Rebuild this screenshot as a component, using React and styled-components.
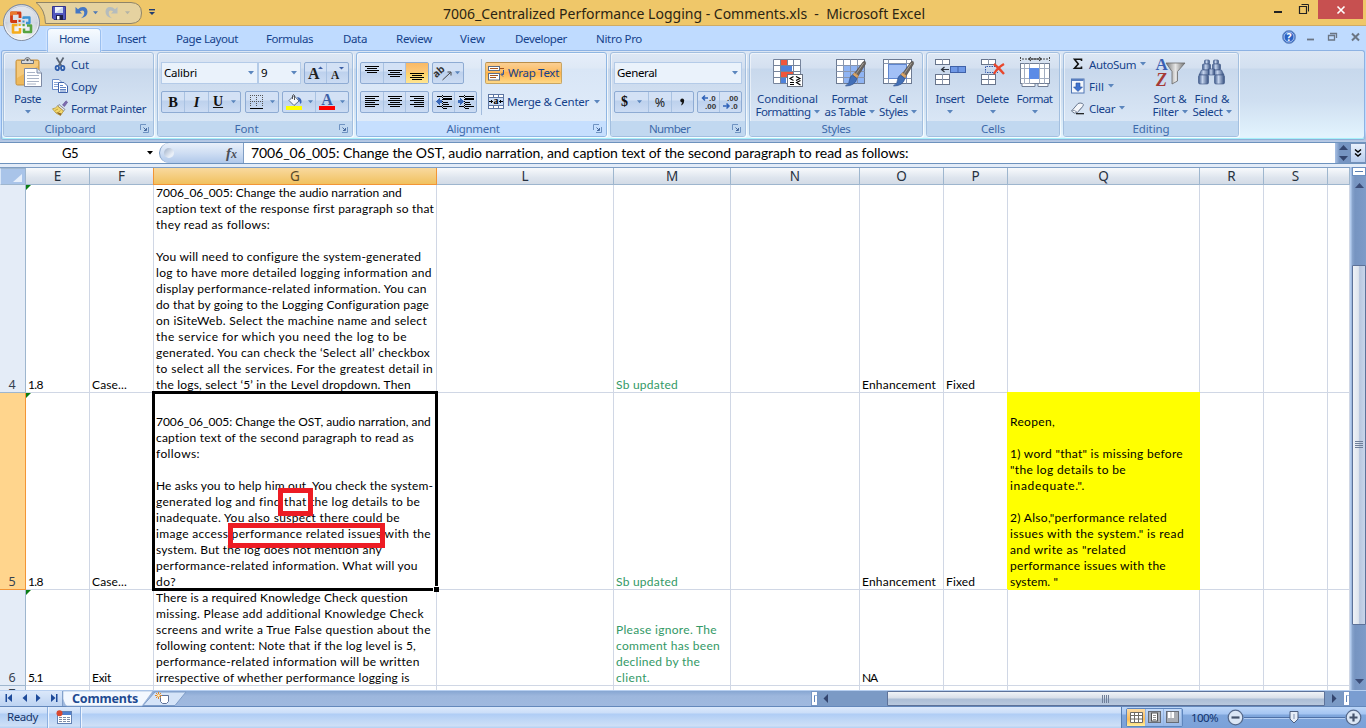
import React, { useLayoutEffect, useRef, useState } from "react";
import styled, { createGlobalStyle, css } from "styled-components";

const ui = `"Noto Sans", "Open Sans", sans-serif`;
const sheetFont = `Lato, "Noto Sans", sans-serif`;

const Global = createGlobalStyle`
  * { box-sizing: border-box; }
  html, body { margin: 0; padding: 0; overflow: hidden; }
  body { font-family: ${ui}; font-size: 11.5px; color: #15428b; background: #bfdbff; }
  svg { display: block; flex: none; overflow: visible; }
`;

/* ---------- text that is spaced to a known width ---------- */
const FitSpan = styled.span`
  display: block;
  white-space: pre;
  flex: none;
`;
function Fit({ w, children, ...rest }) {
  const ref = useRef(null);
  const [gap, setGap] = useState(0);
  useLayoutEffect(() => {
    const range = document.createRange();
    range.selectNodeContents(ref.current);
    const natural = range.getBoundingClientRect().width;
    const n = String(children).length;
    setGap((w - natural) / n);
  }, [w, children]);
  return (
    <FitSpan ref={ref} style={{ letterSpacing: gap, width: w }} {...rest}>
      {children}
    </FitSpan>
  );
}

/* ---------- frame ---------- */
const Window = styled.div`
  width: 1366px;
  height: 728px;
  display: flex;
  flex-direction: column;
  position: relative;
  overflow: hidden;
`;
const TitleBar = styled.header`
  height: 26px;
  flex: none;
  background: #efc769;
  border-bottom: 1px solid #cfab64;
  display: flex;
  position: relative;
`;
const QuickAccess = styled.div`
  width: 106px;
  height: 22px;
  margin: 2px 0 0 36px;
  position: relative;
`;
const QuickShape = styled.svg`
  position: absolute;
  left: 0;
  top: 0;
`;
const QuickItems = styled.div`
  position: relative;
  display: flex;
  align-items: center;
  height: 21px;
  padding-left: 16px;
`;
const QuickItem = styled.div`
  margin-right: ${(p) => p.$mr}px;
`;
const QuickMore = styled.div`
  margin: 7px 0 0 7px;
`;
const TitleText = styled.div`
  margin: 4px 0 0 288px;
  font-size: 14px;
  line-height: 20px;
  color: #2b2413;
`;
const WindowButtons = styled.div`
  margin-left: auto;
  display: flex;
  align-items: flex-start;
`;
const CloseButton = styled.div`
  width: 45px;
  height: 19px;
  margin: 0 3px 0 9px;
  background: #c75050;
  display: flex;
  align-items: center;
  justify-content: center;
`;
const Orb = styled.svg`
  position: absolute;
  left: 2px;
  top: 3px;
  z-index: 3;
`;
const TabRow = styled.nav`
  height: 24px;
  flex: none;
  background: #bfdbff;
  display: flex;
  padding-left: 47px;
`;
const Tab = styled.div`
  margin: 2px 0 0 ${(p) => p.$gap || 0}px;
  height: 22px;
  line-height: 21px;
  ${(p) =>
    p.$active &&
    css`
      width: 54px;
      height: 24px;
      padding-left: 11px;
      position: relative;
      z-index: 2;
      border: 1px solid #9bc0f0;
      border-bottom: 0;
      border-radius: 4px 4px 0 0;
      line-height: 20px;
      background: linear-gradient(#f7fbff, #e6f0fc 60%, #dfe8f5);
      box-shadow: 0 0 2px #fff;
    `}
`;
const TabTools = styled.div`
  margin-left: auto;
  display: flex;
  align-items: flex-start;
`;

/* ---------- ribbon ---------- */
const RibbonArea = styled.div`
  height: 92px;
  flex: none;
  padding: 0 1px;
  background: linear-gradient(#bfdbff 0 80px, #a8bfdf 88px, #b9cbe6);
`;
const Ribbon = styled.section`
  height: 89px;
  border: 1px solid #8db2e3;
  border-bottom: 1px solid #a5f0fa;
  border-radius: 3px;
  background: linear-gradient(#dbe6f4 0, #d3e0f0 17px, #c7d8ec 18px, #cfdff1 50px, #e2f3fd 85px);
  box-shadow: 0 1px 0 #8faed6;
  display: flex;
  gap: 3px;
  padding: 1px 0 0 1px;
`;
const Group = styled.div`
  width: ${(p) => p.$w}px;
  height: 85px;
  flex: none;
  border: 1px solid ${(p) => (p.$hot ? "#8fb6e2" : "#a3bfdf")};
  border-radius: 3px;
  box-shadow: inset 1px 1px 0 rgba(255, 255, 255, 0.5), 1px 1px 0 rgba(255, 255, 255, 0.7);
  background: ${(p) =>
    p.$hot
      ? "linear-gradient(#e6eefa 0, #dfe9f6 15px, #d9e6f6 16px, #dfebf9 68px)"
      : "linear-gradient(#dde7f4 0, #d4e0f0 15px, #c8d8ec 16px, #d9e6f5 68px)"};
  display: flex;
  flex-direction: column;
`;
const GroupBody = styled.div`
  flex: 1;
  display: flex;
  padding-left: ${(p) => p.$pl || 0}px;
`;
const GroupTitle = styled.div`
  height: 15px;
  flex: none;
  display: flex;
  align-items: center;
  color: #3e6aaa;
  background: ${(p) => (p.$hot ? "#c6dffe" : "#c1d8f0")};
  border-radius: 0 0 2px 2px;
  & > div { flex: 1; display: flex; justify-content: center; }
  & > svg { margin: 0 4px 0 ${(p) => (p.$launch ? 4 : 0)}px; }
`;
const BigButton = styled.div`
  width: ${(p) => p.$w}px;
  flex: none;
  padding-top: 3px;
  display: flex;
  flex-direction: column;
  align-items: center;
  line-height: 13px;
`;
const BigIcon = styled.div`
  width: 32px;
  height: 32px;
  margin-bottom: 4px;
`;
const LabelLine = styled.div`
  height: 13px;
  display: flex;
  align-items: center;
  gap: 3px;
`;
const SmallColumn = styled.div`
  padding-left: ${(p) => p.$pl || 0}px;
  width: ${(p) => p.$w}px;
`;
const SmallRow = styled.div`
  height: 22px;
  display: flex;
  align-items: center;
  gap: 3px;
  & > :nth-child(3) { margin-left: 1px; }
`;
const ControlColumn = styled.div`
  padding: 9px 0 0 ${(p) => p.$pl || 0}px;
`;
const ControlRow = styled.div`
  display: flex;
  height: 22px;
  margin-bottom: 7px;
`;
const Combo = styled.div`
  width: ${(p) => p.$w}px;
  height: 22px;
  margin-right: ${(p) => p.$mr || 0}px;
  border: 1px solid #b4cbe8;
  background: #eaf2fb;
  color: #000;
  display: flex;
  align-items: center;
  justify-content: space-between;
  padding: 0 3px 1px 2px;
`;
const ButtonSet = styled.div`
  width: ${(p) => p.$w}px;
  height: 22px;
  margin-right: ${(p) => p.$mr || 0}px;
  border: 1px solid #8eabd3;
  border-radius: 2px;
  background: linear-gradient(#d3e1f5 0 8px, #bdd1ed 9px, #ccdcf3);
  display: flex;
`;
const ToolCell = styled.div`
  width: ${(p) => p.$w}px;
  flex: none;
  display: flex;
  align-items: center;
  justify-content: center;
  gap: ${(p) => p.$gap || 0}px;
  border-right: ${(p) => (p.$last ? 0 : "1px solid #a9c2e2")};
  ${(p) => p.$on && "background: linear-gradient(#f9b966, #fdc877 45%, #fed265 50%, #ffe592);"}
`;
const Glyph = styled.span`
  font-family: "Liberation Serif", serif;
  font-weight: bold;
  font-size: ${(p) => p.$s || 14.5}px;
  line-height: 18px;
  color: #111;
  font-style: ${(p) => (p.$i ? "italic" : "normal")};
  text-decoration: ${(p) => (p.$u ? "underline" : "none")};
`;
const Percent = styled.span`
  font-size: 12.5px;
  color: #222;
`;
const Rule = styled.div`
  width: 1px;
  height: 56px;
  margin: 6px 3px 0 4px;
  background: #a3bcdd;
`;
const WrapButton = styled.div`
  width: 77px;
  height: 22px;
  border: 1px solid #a88a55;
  border-color: #b98e4b #c9a662 #c9a662;
  border-radius: 2px;
  background: linear-gradient(#fbcf93, #fcbf6a 40%, #fdb34c 48%, #fed886);
  display: flex;
  align-items: center;
  gap: 3px;
  padding: 0 0 1px 2px;
`;
const MergeButton = styled.div`
  height: 21px;
  display: flex;
  align-items: center;
  gap: 3px;
  padding-left: 3px;
  & > :nth-child(3) { margin-left: 2px; }
`;

/* ---------- formula bar ---------- */
const FormulaBar = styled.div`
  height: 22px;
  flex: none;
  display: flex;
  background: #fff;
  border-top: 1px solid #6d92bd;
  border-bottom: 1px solid #6d92bd;
`;
const NameBox = styled.div`
  width: 159px;
  padding: 0 5px 0 62px;
  display: flex;
  align-items: center;
  justify-content: space-between;
  color: #000;
  font: 13px/20px ${sheetFont};
`;
const FxArea = styled.div`
  width: 85px;
  border: 1px solid #7f9dc4;
  border-width: 0 1px 0 1px;
  border-radius: 10px 0 0 10px;
  background: linear-gradient(#e9f0fa, #cfdef3 50%, #b0c8ea);
  display: flex;
  align-items: center;
  justify-content: space-between;
  padding: 0 6px 0 4px;
`;
const Knob = styled.div`
  width: 10px;
  height: 10px;
  border-radius: 50%;
  background: linear-gradient(135deg, #9fb0c8, #e9eff7 70%);
`;
const Fx = styled.span`
  font: italic bold 15px/18px "Liberation Serif", serif;
  color: #4b4f58;
  & > small { font-size: 12px; }
`;
const FormulaText = styled.div`
  flex: 1;
  padding-left: 7px;
  color: #000;
  font: 14px/20px ${sheetFont};
`;
const FormulaSpin = styled.div`
  width: 15px;
  background: linear-gradient(90deg, #a9c1e4, #7695c2 30%);
  display: flex;
  flex-direction: column;
  align-items: center;
  justify-content: space-between;
  padding: 2px 0 2px 1px;
`;
const FormulaExpand = styled.div`
  width: 16px;
  border: 1px solid #7590b8;
  background: linear-gradient(#e9f1fc, #b7cdee);
  display: flex;
  align-items: center;
  justify-content: center;
`;
const Strip = styled.div`
  height: 3px;
  flex: none;
  background: #e3ecf8;
`;

/* ---------- sheet ---------- */
const Work = styled.main`
  height: 523px;
  flex: none;
  display: flex;
`;
const Sheet = styled.div`
  width: 1350px;
  background: #fff;
  overflow: hidden;
`;
const HeadRow = styled.div`
  height: 18px;
  display: flex;
  border-top: 1px solid #7f9ec4;
`;
const Corner = styled.div`
  width: 26px;
  flex: none;
  background: #a9c4e9;
  border: 1px solid #9eb6ce;
  border-left-color: #d8e6f8;
  display: flex;
  align-items: flex-end;
  justify-content: flex-end;
  padding: 0 3px 2px 0;
`;
const ColHead = styled.div`
  width: ${(p) => p.$w}px;
  flex: none;
  text-align: center;
  font: 13.5px/17px ${ui};
  color: ${(p) => (p.$on ? "#5b4a2b" : "#27313f")};
  border-right: 1px solid #9eb6ce;
  border-bottom: 1px solid #9eb6ce;
  background: linear-gradient(#f8fafc, #dee5ee 60%, #d3dbe6);
  ${(p) =>
    p.$on &&
    css`
      margin-left: -1px;
      width: ${p.$w + 1}px;
      border: 1px solid #f29536;
      border-top: 0;
      background: linear-gradient(#f9d99f, #f1c15f);
    `}
`;
const SheetRow = styled.div`
  height: ${(p) => p.$h}px;
  display: flex;
`;
const RowHead = styled.div`
  width: 26px;
  flex: none;
  display: flex;
  flex-direction: column;
  justify-content: flex-end;
  padding-right: 1px;
  text-align: center;
  font: 12.5px/15px ${ui};
  color: #35414f;
  overflow: hidden;
  border-right: 1px solid ${(p) => (p.$on ? "#f29536" : "#9eb6ce")};
  border-bottom: 1px solid ${(p) => (p.$on ? "#f29536" : "#9eb6ce")};
  background: ${(p) => (p.$on ? "#ffd58d" : "#e4ecf7")};
`;
const Cell = styled.div`
  width: ${(p) => p.$w}px;
  flex: none;
  position: relative;
  display: flex;
  flex-direction: column;
  justify-content: flex-end;
  padding-left: 2px;
  font: 12px/16px ${sheetFont};
  color: ${(p) => p.$c || "#000"};
  border-right: 1px solid ${(p) => p.$bg || "#d0d7e5"};
  border-bottom: 1px solid ${(p) => p.$bg || "#d0d7e5"};
  background: ${(p) => p.$bg || "#fff"};
  box-shadow: ${(p) => (p.$bg ? `-1px -1px 0 ${p.$bg}, 0 -1px 0 ${p.$bg}` : "none")};
  & > span { position: relative; top: 1px; height: 16px; }
`;
const Flag = styled.svg`
  position: absolute;
  left: 0;
  top: 0;
`;
const Selection = styled.div`
  position: absolute;
  left: -2px;
  top: -2px;
  width: 286px;
  height: 200px;
  border: 3px solid #000;
  z-index: 2;
`;
const FillHandle = styled.div`
  position: absolute;
  right: -4px;
  bottom: -4px;
  width: 6px;
  height: 6px;
  background: #000;
  border: 1px solid #fff;
  border-width: 1px 0 0 1px;
`;
const Mark = styled.div`
  position: absolute;
  z-index: 3;
  left: ${(p) => p.$x}px;
  top: ${(p) => p.$y}px;
  width: ${(p) => p.$w}px;
  height: ${(p) => p.$h}px;
  border: 5px solid #ed1c24;
`;
const VScroll = styled.div`
  width: 16px;
  display: flex;
  flex-direction: column;
  align-items: center;
  background: linear-gradient(90deg, #b5cdef 0 1px, #8ba7cf 2px, #7694c1 5px, #7d9bc8);
`;
const SplitBox = styled.div`
  width: 14px;
  height: 9px;
  margin-left: 2px;
  border: 1px solid #6c8fc0;
  background: #fff;
  padding: 3px 2px 0;
  & > i { display: block; height: 1px; background: #5b7fb2; }
`;
const VArrow = styled.div`
  height: ${(p) => p.$h}px;
  padding-top: ${(p) => p.$pt}px;
  margin-left: 2px;
`;
const VThumb = styled.div`
  width: 14px;
  height: 360px;
  margin-left: 2px;
  border: 1px solid #5d7299;
  border-radius: 1px;
  background: linear-gradient(90deg, #eef2f7, #dfe5ee 45%, #b9c7df 55%, #c8d5ea);
  display: flex;
  align-items: center;
  justify-content: center;
`;

/* ---------- sheet tabs ---------- */
const SheetBar = styled.div`
  height: 17px;
  flex: none;
  display: flex;
  border-top: 1px solid #b7cff0;
  border-bottom: 1px solid #6488bb;
  background: linear-gradient(#87a6d2, #9db7dd 5px, #a0b9df);
`;
const SheetNav = styled.div`
  width: 63px;
  border-right: 1px solid #7f9dc8;
  background: linear-gradient(#dbe8fa, #bdd3f2);
  display: flex;
  align-items: center;
  padding: 0 0 1px 5px;
`;
const SheetTabs = styled.div`
  width: 748px;
  position: relative;
  display: flex;
`;
const TabShape = styled.svg`
  position: absolute;
  left: 0;
  top: 0;
`;
const TabName = styled.div`
  position: relative;
  padding-left: 9px;
  font: bold 12.5px/15px ${ui};
  color: #1e4a91;
`;
const HSplit = styled.div`
  width: 7px;
  border: 1px solid #7796c4;
  background: #fff;
  padding: 3px 0 0 2px;
  & > i { display: block; width: 3px; height: 7px; border-left: 1px solid #6185b9; border-top: 1px solid #a8c1e4; }
`;
const HTrack = styled.div`
  width: 525px;
  background: #7b9ac5;
  display: flex;
  align-items: center;
`;
const HThumb = styled.div`
  width: 438px;
  height: 15px;
  margin-left: 58px;
  margin-right: 6px;
  border: 1px solid #5d7299;
  border-radius: 1px;
  background: linear-gradient(#f0f3f7, #d8dfe9 45%, #acbed6 55%, #b9c9de);
  display: flex;
  align-items: center;
  justify-content: center;
`;
const ScrollCorner = styled.div`
  flex: 1;
  background: #7a9dd1;
`;

/* ---------- status bar ---------- */
const StatusBar = styled.footer`
  height: 21px;
  flex: none;
  display: flex;
  background: linear-gradient(#dce9fb 0, #cbdef8 6px, #afcdf5 7px, #cfe0f6 19px, #b9d3f3 20px);
`;
const StatusItem = styled.div`
  width: ${(p) => p.$w}px;
  padding: 0 0 2px ${(p) => p.$pl}px;
  display: flex;
  align-items: center;
  color: #17376c;
  border-right: 1px solid #8db0e0;
  box-shadow: 1px 0 0 #eef5ff;
`;
const StatusRight = styled.div`
  width: 245px;
  margin-left: auto;
  display: flex;
  align-items: center;
  border-left: 1px solid #567db0;
  background: linear-gradient(#bcd6f8, #a5c5f2 7px, #7fa6dc 8px, #7ba1d8);
  color: #10336e;
  padding: 0 0 1px 4px;
`;
const ViewSet = styled.div`
  width: 57px;
  height: 19px;
  border: 1px solid #5f86bd;
  border-radius: 2px;
  display: flex;
  margin-right: 8px;
`;
const ViewCell = styled.div`
  width: ${(p) => (p.$on ? 19 : 18)}px;
  display: flex;
  align-items: center;
  justify-content: center;
  border-right: 1px solid #95b6e4;
  background: ${(p) => (p.$on ? "linear-gradient(#fbdca6, #fdbc58 60%, #fff09b)" : "linear-gradient(#c5dbf8, #97b8e8)")};
`;
const ZoomLabel = styled.div`
  margin-right: 9px;
`;

/* ---------- icons ---------- */
const Caret = ({ c = "#5b86bd", w = 6 }) => (
  <svg width={w} height="4" viewBox="0 0 6 4"><path d="M0 0H6L3 3.5Z" fill={c} /></svg>
);
const Launcher = () => (
  <svg width="9" height="9" viewBox="0 0 9 9" fill="none" stroke="#6f93c2">
    <path d="M.5 6V.5H6" /><path d="M8.5 3V8.5H3" /><path d="M3.5 3.5L6 6M6.5 4V6.5H4" stroke="#46699e" />
  </svg>
);
const Lines = ({ rows, w = 14, top = 0 }) => (
  <svg width={w} height="14" viewBox={`0 0 ${w} 14`} shapeRendering="crispEdges">
    {rows.map(([x, n], i) => <rect key={i} x={x} y={top + i * 2} width={n} height="1" fill="#000" />)}
  </svg>
);
const left = [[0, 14], [0, 10], [0, 14], [0, 10], [0, 14], [0, 10]];
const mid = [[0, 14], [2, 10], [0, 14], [2, 10], [0, 14], [2, 10]];
const right = [[0, 14], [4, 10], [0, 14], [4, 10], [0, 14], [4, 10]];
const short = [[0, 14], [2, 10], [0, 14], [2, 10]];

const OfficeOrb = () => (
  <Orb width="39" height="39" viewBox="0 0 39 39">
    <defs>
      <radialGradient id="orb" cx=".5" cy=".75" r=".75">
        <stop offset="0" stopColor="#fff" /><stop offset=".55" stopColor="#d5dae3" /><stop offset="1" stopColor="#98a4b8" />
      </radialGradient>
      <linearGradient id="orbTop" x1="0" y1="0" x2="0" y2="1">
        <stop offset="0" stopColor="#f3f5f8" /><stop offset="1" stopColor="#cdd5e1" />
      </linearGradient>
    </defs>
    <circle cx="19.5" cy="19.5" r="18" fill="url(#orb)" stroke="#7f8ba0" />
    <path d="M3.5 19a16 15.5 0 0 1 32 0Q20 24 3.500 19Z" fill="url(#orbTop)" opacity=".8" />
    <circle cx="19.5" cy="19.5" r="16.8" fill="none" stroke="#fff" opacity=".7" />
    <g fill="none" strokeWidth="2.8" strokeLinejoin="round">
      <path d="M15 18.500H9.500V10H18V15" stroke="#cf3a14" />
      <path d="M9.500 12.500V10H15" stroke="#ea7a2c" />
      <path d="M21.500 16V14.500H27.500V20H24" stroke="#3a92d2" strokeWidth="2.300" />
      <path d="M15.500 22H11V29.500H18V25" stroke="#f5ac1c" strokeWidth="2.600" />
      <path d="M22 25.500V29H29V22.500H25" stroke="#57a441" strokeWidth="2.600" />
    </g>
    <rect x="16.500" y="16.800" width="2.200" height="2.200" fill="#cf3a14" /><rect x="20.500" y="17.500" width="2" height="2" fill="#3a92d2" />
    <rect x="16.500" y="20.800" width="2.200" height="2.200" fill="#f5ac1c" /><rect x="20.500" y="21" width="2.200" height="2.200" fill="#57a441" />
  </Orb>
);
const Save = () => (
  <svg width="14" height="14" viewBox="0 0 14 14">
    <path d="M.5.5H13.500V13.500H2L.5 12Z" fill="#5257bd" stroke="#33348c" />
    <rect x="3" y="1" width="8" height="6" fill="#eef2fb" /><path d="M3 7L11 1V7Z" fill="#c7d5f0" />
    <rect x="4" y="9" width="7" height="5" fill="#1f2149" /><rect x="5" y="10" width="2.500" height="3.500" fill="#fff" />
  </svg>
);
const Undo = ({ flip, c = "#4577c4" }) => (
  <svg width="13" height="13" viewBox="0 0 13 13">
    <g transform={flip ? "translate(13 0) scale(-1 1)" : undefined}>
      <path d="M.5 1V7.500H7L4.900 5.500Q9 3.200 9.300 6.800 9.300 10 6 12.300 12.500 10.800 12.500 5.800 12.300 1 8 1 5 1.100 3 3.300Z" fill={c} />
    </g>
  </svg>
);
const PasteIcon = () => (
  <svg width="32" height="32" viewBox="0 0 32 32">
    <rect x="4" y="4" width="23" height="25" rx="1.500" fill="#eeb95c" stroke="#c48f3c" />
    <path d="M5 5H26V10L5 22Z" fill="#f7d08a" opacity=".7" />
    <path d="M9.500 7.500V4.500H12.500Q13 1.500 15.500 1.500T18.500 4.500H21.500V7.500Z" fill="#d7dade" stroke="#6d7178" />
    <circle cx="15.500" cy="4" r="1.200" fill="#555" />
    <path d="M12.500 12.500H25L29.500 17V30.500H12.500Z" fill="#fff" stroke="#7d8aa5" />
    <path d="M25 12.500V17H29.500" fill="#dfe6f2" stroke="#7d8aa5" />
    <path d="M15 16.500H23M15 19.500H27M15 22.500H27M15 25.500H27M15 28H24" stroke="#aab4c6" />
  </svg>
);
const Cut = () => (
  <svg width="16" height="16" viewBox="0 0 16 16" fill="none">
    <path d="M4.500 1.500L9.500 10M11.500 1.500L6.500 10" stroke="#5b6573" strokeWidth="1.700" />
    <ellipse cx="5.300" cy="12" rx="1.700" ry="2.200" stroke="#2f5dab" strokeWidth="1.800" />
    <ellipse cx="10.700" cy="12" rx="1.700" ry="2.200" stroke="#2f5dab" strokeWidth="1.800" />
  </svg>
);
const Copy = () => (
  <svg width="16" height="16" viewBox="0 0 16 16">
    <path d="M.5 1.500H7L9.500 4V11.500H.5Z" fill="#fff" stroke="#6a8cc8" />
    <path d="M2 4.500H6M2 6.500H7M2 8.500H7" stroke="#8aa6d6" />
    <path d="M6.500 4.500H12L15.500 8V14.500H6.500Z" fill="#fff" stroke="#3e63ab" />
    <path d="M8 7.500H11M8 9.500H14M8 11.500H14M8 13H14" stroke="#5f83c4" />
  </svg>
);
const Painter = () => (
  <svg width="16" height="16" viewBox="0 0 16 16">
    <path d="M10.500 5L14 .8 15.600 2.200 12.500 6.500Z" fill="#7d6bb0" stroke="#5f5090" strokeWidth=".6" />
    <path d="M7 4.500L13 9.500 11.500 11 5.800 6Z" fill="#e8e8ee" stroke="#777" strokeWidth=".8" />
    <path d="M5.500 6L11.500 11 8.500 15.500Q3.500 14 .5 8.800 3.800 8.500 5.500 6Z" fill="#f3d86c" stroke="#a88c33" strokeWidth=".7" />
    <path d="M3 10.500L6 9M5.500 13L8.500 10.500" stroke="#b89738" strokeWidth=".8" />
    <path d="M4 12L8.500 15.500 9.500 13.500" fill="#8b5f2b" />
  </svg>
);
const Borders = () => (
  <svg width="14" height="14" viewBox="0 0 14 14" shapeRendering="crispEdges" fill="none">
    <path d="M0 .5H13M0 6.500H13M.5 0V12M6.500 0V12M12.500 0V12" stroke="#555" strokeDasharray="1 1" />
    <path d="M0 13.500H13" stroke="#000" />
  </svg>
);
const Bucket = () => (
  <svg width="17" height="16" viewBox="0 0 17 16">
    <path d="M3 6.500L8 1.500 13 7 8 11.500Z" fill="#f4f7fb" stroke="#5c6c86" />
    <path d="M6.500 5V1.500Q7.500 -.5 8.500 1.500V6" fill="none" stroke="#444" strokeWidth=".9" />
    <path d="M11 3Q16 3.500 15.500 8.500L14.500 10Q13.500 7 12 5Z" fill="#3a65b5" />
    <rect x="0" y="12" width="16" height="4" fill="#ff0" />
  </svg>
);
const FontColorIcon = () => (
  <svg width="16" height="16" viewBox="0 0 16 16">
    <text x="8" y="11.300" textAnchor="middle" fontFamily="Liberation Serif" fontWeight="bold" fontSize="16" fill="#3d5fa6">A</text>
    <rect x="0" y="12" width="16" height="4" fill="#f00" />
  </svg>
);
const GrowFont = ({ small }) => (
  <svg width="16" height="16" viewBox="0 0 16 16">
    <text x={small ? 1 : 0} y="14" fontFamily="Liberation Serif" fontWeight="bold" fontSize={small ? 11.5 : 16} fill="#222">A</text>
    {small ? <path d="M9 2H14L11.500 4.500Z" fill="#3c5fa5" /> : <path d="M10 4H15L12.500 1.500Z" fill="#3c5fa5" />}
  </svg>
);
const Orient = () => (
  <svg width="17" height="15" viewBox="0 0 17 15">
    <text x="-2" y="9" transform="rotate(-42 4 9) translate(1 0)" fontFamily="Noto Sans" fontWeight="bold" fontSize="10" fill="#333">ab</text>
    <path d="M6.500 14L14.500 6.500M11.500 6H15V9.500" stroke="#444" fill="none" />
  </svg>
);
const Indent = ({ inc }) => (
  <svg width="16" height="14" viewBox="0 0 16 14" shapeRendering="crispEdges">
    <path d="M1 1.500H6M7 1.500H16M7 7.500H12M1 11.500H6M7 11.500H16" stroke="#000" />
    <rect x="7" y="3" width="9" height="2" fill="#000" />
    <path d="M7 9.500H13M7 13.500H11" stroke="#000" />
    <path d="M6.500 0V14" stroke="#000" strokeDasharray="1 1" />
    {inc ? <path d="M0 5H2V3L6 6.500 2 10V8H0Z" fill="#3b69b8" /> : <path d="M6 5H4V3L0 6.500 4 10V8H6Z" fill="#3b69b8" />}
  </svg>
);
const WrapIcon = () => (
  <svg width="17" height="16" viewBox="0 0 17 16" fill="none">
    <rect x=".5" y="1.500" width="11" height="4" fill="#fff" stroke="#5c6c86" />
    <path d="M2 3.500H10M12 3.500H16" stroke="#a5541c" />
    <rect x=".5" y="8.500" width="11" height="6.500" fill="#fff" stroke="#5c6c86" />
    <path d="M2 10.500H10M2 12.500H8" stroke="#a5541c" />
    <path d="M15.500 5V9.500H13.500M15 7.500L13 9.500 15 11.500" stroke="#33559a" />
  </svg>
);
const MergeIcon = () => (
  <svg width="16" height="15" viewBox="0 0 16 15" shapeRendering="crispEdges">
    <rect x=".5" y=".5" width="15" height="14" fill="#fff" stroke="#5d76a3" />
    <path d="M5.500 0V4M10.500 0V4M5.500 11V15M10.500 11V15M0 3.500H16M0 11.500H16" stroke="#5d76a3" />
    <rect x="1" y="4" width="14" height="7" fill="#c9dbf5" />
    <text x="8" y="10" fontSize="10" textAnchor="middle" fontFamily="Liberation Serif" fontWeight="bold" fill="#000">a</text>
    <path d="M1 7.500H5M11 7.500H15M3.500 6V9M12.500 6V9" stroke="#000" />
  </svg>
);
const Decimals = ({ more }) => (
  <svg width="16" height="16" viewBox="0 0 16 16" fontFamily="Liberation Sans" fontSize="8" fontWeight="bold" fill="#333">
    <text x={more ? 8 : 4} y="6.800">{more ? ".0" : ".00"}</text>
    <text x={more ? 4 : 8} y="15">{more ? ".00" : ".0"}</text>
    {more ? <path d="M7 4H2M4 1.500L1.500 4 4 6.500" stroke="#2f62b8" strokeWidth="1.500" fill="none" />
      : <path d="M0 12H5M3.500 9.500L6 12 3.500 14.500" stroke="#2f62b8" strokeWidth="1.500" fill="none" />}
  </svg>
);
const Brush = () => (
  <g>
    <path d="M29 6Q32 4 31.500 8L24 20 20.500 17.500Z" fill="#6a6560" stroke="#4b4743" strokeWidth=".6" />
    <path d="M29.500 7L22 18" stroke="#aaa49b" strokeWidth=".9" />
    <path d="M20.500 16.500L24.500 19.500 23 22.500 18.500 19Z" fill="#d9a567" stroke="#95683a" strokeWidth=".5" />
    <path d="M18.500 19L23 22.500Q21 30 11.500 30 16 27 16 22 16.500 20 18.500 19Z" fill="#426fb6" stroke="#2c4f8c" strokeWidth=".7" />
  </g>
);
const CondFormat = () => (
  <svg width="32" height="32" viewBox="0 0 32 32">
    <rect x="1.500" y="3.500" width="27" height="24" fill="#fff" />
    <rect x="8" y="22" width="6" height="6" fill="#4e82db" />
    <rect x="8" y="3" width="7" height="6" fill="#f0563c" /><rect x="8" y="10" width="12" height="6" fill="#4e82db" />
    <rect x="8" y="16" width="13" height="6" fill="#f0563c" />
    <path d="M1.500 3.500H28.500V27.500H1.500ZM1.500 9.500H28.500M1.500 15.500H28.500M1.500 21.500H28.500M8.500 3.500V27.500M15.500 3.500V10M15.500 22V27.500M21.500 3.500V27.500" stroke="#76849c" fill="none" />
    <rect x="15.500" y="18.500" width="15" height="12" fill="#fff" stroke="#6b7484" />
    <path d="M21.500 20.500L18 22.500 21.500 24.500M18 26.500H22M18 28.500H22M24 20.500L28 22.500 24 24.500M28.500 24.500L24.500 26.500 28.500 29" stroke="#000" fill="none" strokeWidth="1.100" />
  </svg>
);
const FormatTable = () => (
  <svg width="32" height="32" viewBox="0 0 32 32">
    <rect x="2.500" y="3.500" width="28" height="24" fill="#fff" stroke="#6c7a92" />
    <rect x="9" y="9" width="21" height="18" fill="#8fb4f3" />
    <path d="M2.500 9.500H30.500M2.500 15.500H30.500M2.500 21.500H30.500M9.500 3.500V27.500M16.500 3.500V27.500M23.500 3.500V27.500" stroke="#8796b0" />
    <Brush />
  </svg>
);
const CellStyles = () => (
  <svg width="32" height="32" viewBox="0 0 32 32">
    <rect x="1.500" y="3.500" width="28" height="24" fill="#fff" stroke="#6c7a92" />
    <path d="M1.500 7.500H29.500M1.500 22.500H29.500M6.500 3.500V27.500M24.500 3.500V27.500" stroke="#8796b0" />
    <rect x="6.500" y="8.500" width="18" height="14" fill="#a2c0f6" stroke="#5f86cf" />
    <Brush />
  </svg>
);
const MiniCells = ({ y }) => (
  <>
    <rect x="1.500" y={y + 0.5} width="14" height="5" fill="#fff" stroke="#68758c" />
    <path d={`M8.500 ${y}V${y + 5}`} stroke="#8b97ac" />
  </>
);
const InsertIcon = () => (
  <svg width="32" height="32" viewBox="0 0 32 32">
    <MiniCells y={3} /><MiniCells y={18} /><MiniCells y={23} />
    <rect x="16.500" y="10.500" width="15" height="6" fill="#6f98e6" stroke="#3f61a8" /><path d="M24 10.500V16.500" stroke="#3f61a8" />
    <path d="M15 13.500H8M10.500 11L7.500 13.500 10.500 16" stroke="#2d333d" fill="none" strokeWidth="1.200" />
  </svg>
);
const DeleteIcon = () => (
  <svg width="32" height="32" viewBox="0 0 32 32">
    <g transform="translate(3)"><MiniCells y={3} /><MiniCells y={18} /><MiniCells y={23} /></g>
    <path d="M21 10.500H8.500V16.500H21" stroke="#3155a8" strokeDasharray="1.500 1" fill="none" />
    <path d="M17 8Q22 12 27 18M27 8Q20 12 17 18" stroke="#e8472c" strokeWidth="2.300" fill="none" />
  </svg>
);
const FormatCells = () => (
  <svg width="32" height="32" viewBox="0 0 32 32">
    <path d="M1.500 1V5M30.500 1V5M3 3H29" stroke="#444" strokeDasharray="2 1" /><path d="M10 3H22M12 1L9.500 3 12 5M20 1L22.500 3 20 5" stroke="#333" fill="none" />
    <rect x="1.500" y="7.500" width="29" height="20" fill="#fff" stroke="#717e95" />
    <path d="M1.500 12.500H30.500M1.500 22.500H30.500M5.500 7.500V27.500M10.500 7.500V27.500M20.500 7.500V27.500M25.500 7.500V27.500" stroke="#a2adc0" />
    <rect x="10" y="12" width="10" height="11" fill="#5b8be6" />
    <path d="M3 27.500V30.500H16V28M19 28V30.500H29V28" stroke="#717e95" fill="#fff" />
  </svg>
);
const Sigma = () => (
  <svg width="16" height="16" viewBox="0 0 16 16">
    <path d="M11.500 5V3.300H4.500L8.300 8 4.500 12.200H11.500V10.500" fill="none" stroke="#111" strokeWidth="1.600" />
  </svg>
);
const FillIcon = () => (
  <svg width="16" height="16" viewBox="0 0 16 16">
    <rect x="1.500" y="1" width="12.500" height="14" fill="#f3f7fd" stroke="#5177b4" /><path d="M2 2H13.500" stroke="#5a7fc0" strokeWidth="2" />
    <path d="M6 5H10V9H12.500L8 13.500 3.500 9H6Z" fill="#3f73cf" stroke="#28519c" strokeWidth=".6" />
  </svg>
);
const Eraser = () => (
  <svg width="16" height="16" viewBox="0 0 16 16">
    <path d="M1.500 11L8 3.500Q10 2.500 12.500 3.500 14 4.500 13 6L7.500 12.500Q4 14.500 1.500 11Z" fill="#f4f6fa" stroke="#69788f" />
    <path d="M1.500 11Q4 9 7.500 12.500L13 6" fill="none" stroke="#8c99ad" />
    <path d="M6 13.700H14" stroke="#111" strokeWidth="1.200" />
  </svg>
);
const SortFilter = () => (
  <svg width="32" height="32" viewBox="0 0 32 32">
    <defs><linearGradient id="fun"><stop offset="0" stopColor="#777" /><stop offset=".5" stopColor="#e6e6e6" /><stop offset="1" stopColor="#6e6e6e" /></linearGradient></defs>
    <path d="M12 7H31L23.500 15.500V25L18 28V15.500Z" fill="url(#fun)" stroke="#6a6a6a" strokeWidth=".8" />
    <text x="1.500" y="14" fontFamily="Liberation Serif" fontWeight="bold" fontSize="17" fill="#3a5fb3">A</text>
    <text x="2" y="29.500" fontFamily="Liberation Serif" fontWeight="bold" fontStyle="italic" fontSize="18" fill="#a53a36">Z</text>
  </svg>
);
const Binoculars = () => (
  <svg width="32" height="32" viewBox="0 0 32 32">
    <defs><linearGradient id="bin"><stop offset="0" stopColor="#3a5688" /><stop offset=".4" stopColor="#c4d3ec" /><stop offset="1" stopColor="#334d7d" /></linearGradient></defs>
    <g fill="url(#bin)" stroke="#3c5585" strokeWidth=".6">
      <rect x="8.500" y="4" width="5" height="4" rx="1" /><rect x="17.500" y="4" width="5" height="4" rx="1" />
      <rect x="6.500" y="8" width="8" height="6" rx="1" /><rect x="16.500" y="8" width="8" height="6" rx="1" />
      <path d="M5.500 14H14L13 19H3Z" /><path d="M17 14H25.500L28 19H18Z" />
      <rect x="2.500" y="19" width="10" height="9" rx="1.500" /><rect x="18.500" y="19" width="10" height="9" rx="1.500" />
      <rect x="12.500" y="13" width="6" height="6" />
    </g>
  </svg>
);
const NavArrow = ({ dir, bar }) => (
  <svg width="14.500" height="8" viewBox="0 0 14.500 8">
    <g transform={dir === "r" ? "translate(9 0) scale(-1 1)" : undefined}>
      <path d="M7 0V8L2.500 4Z" fill="#1d4a9a" />{bar && <rect x=".5" y="0" width="1.500" height="8" fill="#1d4a9a" />}
    </g>
  </svg>
);
const MacroIcon = () => (
  <svg width="16" height="14" viewBox="0 0 16 14">
    <rect x="1.500" y="1.500" width="14" height="12" fill="#fff" stroke="#6382b4" /><rect x="2" y="2" width="13" height="3" fill="#4f80cf" />
    <path d="M3 7.500H14M3 9.500H14M3 11.500H14" stroke="#7d8ca6" strokeDasharray="3 1" />
    <circle cx="3.500" cy="3.200" r="3" fill="#d9482f" />
  </svg>
);
const ZoomKnob = ({ plus }) => (
  <svg width="17" height="17" viewBox="0 0 17 17">
    <circle cx="8.500" cy="8.500" r="7.300" fill="#dbe6f5" stroke="#56698b" strokeWidth="1.200" />
    <path d={plus ? "M4.500 8.500H12.500M8.500 4.500V12.500" : "M4.500 8.500H12.500"} stroke="#44526b" strokeWidth="2.200" />
  </svg>
);

/* ---------- data ---------- */
const cols = [["E", 64], ["F", 64], ["G", 283], ["L", 177], ["M", 117], ["N", 129], ["O", 84], ["P", 64], ["Q", 192], ["R", 64], ["S", 64], ["", 22]];
const GREEN = "#339966";
const rows = [
  { n: "4", h: 208, cells: {
    E: [["1.8", 15]], F: [["Case...", 35]], O: [["Enhancement", 74]], P: [["Fixed", 29]], M: [["Sb updated", 62]],
    G: [["7006_06_005: Change the audio narration and", 246], ["caption text of the response first paragraph so that", 278], ["they read as follows:", 114], ["", 1],
      ["You will need to configure the system-generated", 265], ["log to have more detailed logging information and", 276], ["display performance-related information. You can", 271],
      ["do that by going to the Logging Configuration page", 273], ["on iSiteWeb. Select the machine name and select", 271], ["the service for which you need the log to be", 251],
      ["generated. You can check the ‘Select all’ checkbox", 274], ["to select all the services. For the greatest detail in", 277], ["the logs, select ‘5’ in the Level dropdown. Then", 255]] } },
  { n: "5", h: 197, on: true, cells: {
    E: [["1.8", 15]], F: [["Case...", 35]], O: [["Enhancement", 74]], P: [["Fixed", 29]], M: [["Sb updated", 62]],
    G: [["7006_06_005: Change the OST, audio narration, and", 275], ["caption text of the second paragraph to read as", 258], ["follows:", 44], ["", 1],
      ["He asks you to help him out. You check the system-", 277], ["generated log and find that the log details to be", 264], ["inadequate. You also suspect there could be", 244],
      ["image access performance related issues with the", 275], ["system. But the log does not mention any", 226], ["performance-related information. What will you", 262], ["do?", 20]],
    Q: [["Reopen,", 45], ["", 1], ['1) word "that" is missing before', 173], ['"the log details to be', 116], ['inadequate.".', 75], ["", 1],
      ['2) Also,"performance related', 157], ['issues with the system." is read', 174], ['and write as "related', 116], ["performance issues with the", 156], ['system. "', 48]] } },
  { n: "6", h: 96, cells: {
    E: [["5.1", 15]], F: [["Exit", 19]], O: [["NA", 15]],
    M: [["Please ignore. The", 101], ["comment has been", 104], ["declined by the", 84], ["client.", 34]],
    G: [["There is a required Knowledge Check question", 252], ["missing. Please add additional Knowledge Check", 268], ["screens and write a True False question about the", 275],
      ["following content: Note that if the log level is 5,", 260], ["performance-related information will be written", 263.5], ["irrespective of whether performance logging is", 254]] } },
];
const tabs = [["Insert", 29, 16], ["Page Layout", 62, 30], ["Formulas", 47, 28], ["Data", 24, 30], ["Review", 36, 29], ["View", 25, 28], ["Developer", 52, 30], ["Nitro Pro", 46, 29]];

const Big = ({ w, icon, a, aw, b, bw }) => (
  <BigButton $w={w}>
    <BigIcon>{icon}</BigIcon>
    <LabelLine><Fit w={aw}>{a}</Fit></LabelLine>
    <LabelLine>{b && <Fit w={bw}>{b}</Fit>}<Caret /></LabelLine>
  </BigButton>
);
const Small = ({ icon, t, w, more }) => (
  <SmallRow>{icon}<Fit w={w}>{t}</Fit>{more && <Caret />}</SmallRow>
);
const Panel = ({ w, title, tw, hot, pl, launch, children }) => (
  <Group $w={w} $hot={hot}>
    <GroupBody $pl={pl}>{children}</GroupBody>
    <GroupTitle $hot={hot} $launch={launch}><div><Fit w={tw}>{title}</Fit></div>{launch && <Launcher />}</GroupTitle>
  </Group>
);

export default function App() {
  return (
    <Window>
      <Global />
      <OfficeOrb />
      <TitleBar>
        <QuickAccess>
          <QuickShape width="106" height="22" viewBox="0 0 106 22">
            <path d="M0 .5H95Q105.500 1 105.500 11T95 21.500H9.500Q9 7 0 .5Z" fill="#e5d2a0" stroke="#8f8468" />
          </QuickShape>
          <QuickItems>
            <QuickItem $mr={9}><Save /></QuickItem>
            <QuickItem $mr={5}><Undo /></QuickItem>
            <QuickItem $mr={7}><Caret c="#4f79b5" w={5} /></QuickItem>
            <QuickItem $mr={7}><Undo flip c="#b5bcbd" /></QuickItem>
            <Caret c="#b3b3a6" w={5} />
          </QuickItems>
        </QuickAccess>
        <QuickMore>
          <svg width="6" height="7" viewBox="0 0 6 7"><path d="M0 2.700H6" stroke="#223d70" strokeWidth="1.400" /><path d="M0 5H6L3 8Z" fill="#223d70" /></svg>
        </QuickMore>
        <TitleText><Fit w={482}>7006_Centralized Performance Logging - Comments.xls  -  Microsoft Excel</Fit></TitleText>
        <WindowButtons>
          <svg width="36" height="19" viewBox="0 0 36 19" fill="none" stroke="#222">
            <path d="M1 12H9" strokeWidth="2" /><path d="M26.500 6.500H33.500V13.500H26.500Z" strokeWidth="1.200" /><path d="M28.500 4.500H35.500V11.500" />
          </svg>
          <CloseButton><svg width="8" height="8" viewBox="0 0 8 8"><path d="M.5.5L7.500 7.500M7.500.5L.5 7.500" stroke="#fff" strokeWidth="1.600" /></svg></CloseButton>
        </WindowButtons>
      </TitleBar>

      <TabRow>
        <Tab $active><Fit w={30}>Home</Fit></Tab>
        {tabs.map(([t, w, g]) => <Tab key={t} $gap={g}><Fit w={w}>{t}</Fit></Tab>)}
        <TabTools>
          <svg width="84" height="24" viewBox="0 0 84 24">
            <circle cx="7" cy="11" r="6.500" fill="#2b62c4" stroke="#7795c4" /><circle cx="7" cy="11" r="5" fill="none" stroke="#cfe0fa" strokeWidth=".8" />
            <text x="7" y="15" textAnchor="middle" fontSize="10.500" fontWeight="bold" fontFamily="Noto Sans" fill="#fff">?</text>
            <path d="M25 13.500H32" stroke="#6b7584" strokeWidth="1.800" />
            <path d="M46.500 9.500H52.500V14H46.500ZM48 7.500H54.500V12" fill="none" stroke="#6b7584" strokeWidth="1.300" />
            <path d="M70 7.500L77 14.500M77 7.500L70 14.500" stroke="#6b7584" strokeWidth="2" />
          </svg>
        </TabTools>
      </TabRow>

      <RibbonArea>
        <Ribbon>
          <Panel w={151} title="Clipboard" tw={51} launch>
            <Big w={47} icon={<PasteIcon />} a="Paste" aw={27} />
            <SmallColumn $pl={1} $w={100}>
              <Small icon={<Cut />} t="Cut" w={18} />
              <Small icon={<Copy />} t="Copy" w={26} />
              <Small icon={<Painter />} t="Format Painter" w={75} />
            </SmallColumn>
          </Panel>

          <Panel w={196} title="Font" tw={24} launch pl={3}>
            <ControlColumn>
              <ControlRow>
                <Combo $w={97}><Fit w={33}>Calibri</Fit><Caret /></Combo>
                <Combo $w={43} $mr={3}><Fit w={7}>9</Fit><Caret /></Combo>
                <ButtonSet $w={45}>
                  <ToolCell $w={22}><GrowFont /></ToolCell>
                  <ToolCell $w={21} $last><GrowFont small /></ToolCell>
                </ButtonSet>
              </ControlRow>
              <ControlRow>
                <ButtonSet $w={80} $mr={4}>
                  <ToolCell $w={23}><Glyph>B</Glyph></ToolCell>
                  <ToolCell $w={24}><Glyph $i>I</Glyph></ToolCell>
                  <ToolCell $w={31} $last $gap={8}><Glyph $u $s={14}>U</Glyph><Caret w={5} /></ToolCell>
                </ButtonSet>
                <ButtonSet $w={34} $mr={3}><ToolCell $w={32} $last $gap={6}><Borders /><Caret w={5} /></ToolCell></ButtonSet>
                <ButtonSet $w={67}>
                  <ToolCell $w={33} $gap={5}><Bucket /><Caret w={5} /></ToolCell>
                  <ToolCell $w={32} $last $gap={5}><FontColorIcon /><Caret w={5} /></ToolCell>
                </ButtonSet>
              </ControlRow>
            </ControlColumn>
          </Panel>

          <Panel w={251} title="Alignment" tw={53} launch hot pl={3}>
            <ControlColumn>
              <ControlRow>
                <ButtonSet $w={69} $mr={3}>
                  <ToolCell $w={23}><Lines rows={short} top={0} /></ToolCell>
                  <ToolCell $w={22}><Lines rows={short} top={4} /></ToolCell>
                  <ToolCell $w={22} $last $on><Lines rows={short} top={7} /></ToolCell>
                </ButtonSet>
                <ButtonSet $w={32}><ToolCell $w={30} $last $gap={2}><Orient /><Caret w={5} /></ToolCell></ButtonSet>
              </ControlRow>
              <ControlRow>
                <ButtonSet $w={69} $mr={3}>
                  <ToolCell $w={23}><Lines rows={left} top={1} /></ToolCell>
                  <ToolCell $w={22}><Lines rows={mid} top={1} /></ToolCell>
                  <ToolCell $w={22} $last><Lines rows={right} top={1} /></ToolCell>
                </ButtonSet>
                <ButtonSet $w={45}>
                  <ToolCell $w={22}><Indent /></ToolCell>
                  <ToolCell $w={21} $last><Indent inc /></ToolCell>
                </ButtonSet>
              </ControlRow>
            </ControlColumn>
            <Rule />
            <ControlColumn>
              <ControlRow><WrapButton><WrapIcon /><Fit w={51}>Wrap Text</Fit></WrapButton></ControlRow>
              <ControlRow><MergeButton><MergeIcon /><Fit w={82}>Merge & Center</Fit><Caret /></MergeButton></ControlRow>
            </ControlColumn>
          </Panel>

          <Panel w={136} title="Number" tw={41} launch pl={3}>
            <ControlColumn>
              <ControlRow><Combo $w={128}><Fit w={40}>General</Fit><Caret /></Combo></ControlRow>
              <ControlRow>
                <ButtonSet $w={80} $mr={3}>
                  <ToolCell $w={34} $gap={9}><Glyph $s={14}>$</Glyph><Caret w={5} /></ToolCell>
                  <ToolCell $w={23}><Percent>%</Percent></ToolCell>
                  <ToolCell $w={21} $last><svg width="5" height="8" viewBox="0 0 5 8"><circle cx="2.200" cy="2.500" r="1.900" fill="#111" /><path d="M4.100 2.500Q4.200 6 1 7.500L2.500 3.500Z" fill="#111" /></svg></ToolCell>
                </ButtonSet>
                <ButtonSet $w={45}>
                  <ToolCell $w={22}><Decimals more /></ToolCell>
                  <ToolCell $w={21} $last><Decimals /></ToolCell>
                </ButtonSet>
              </ControlRow>
            </ControlColumn>
          </Panel>

          <Panel w={174} title="Styles" tw={29}>
            <Big w={75} icon={<CondFormat />} a="Conditional" aw={61} b="Formatting" bw={55} />
            <Big w={49} icon={<FormatTable />} a="Format" aw={36} b="as Table" bw={41} />
            <Big w={48} icon={<CellStyles />} a="Cell" aw={19} b="Styles" bw={29} />
          </Panel>

          <Panel w={134} title="Cells" tw={24}>
            <Big w={46} icon={<InsertIcon />} a="Insert" aw={29} />
            <Big w={39} icon={<DeleteIcon />} a="Delete" aw={33} />
            <Big w={45} icon={<FormatCells />} a="Format" aw={36} />
          </Panel>

          <Panel w={176} title="Editing" tw={37}>
            <SmallColumn $pl={6} $w={86}>
              <Small icon={<Sigma />} t="AutoSum" w={47} more />
              <Small icon={<FillIcon />} t="Fill" w={15} more />
              <Small icon={<Eraser />} t="Clear" w={26} more />
            </SmallColumn>
            <Big w={40} icon={<SortFilter />} a="Sort &" aw={33} b="Filter" bw={26} />
            <Big w={44} icon={<Binoculars />} a="Find &" aw={35} b="Select" bw={30} />
          </Panel>
        </Ribbon>
      </RibbonArea>

      <FormulaBar>
        <NameBox><Fit w={16}>G5</Fit><Caret c="#000" w={8} /></NameBox>
        <FxArea><Knob /><Fx>f<small>x</small></Fx></FxArea>
        <FormulaText><Fit w={658}>7006_06_005: Change the OST, audio narration, and caption text of the second paragraph to read as follows:</Fit></FormulaText>
        <FormulaSpin>
          <svg width="9" height="5" viewBox="0 0 9 5"><path d="M0 5H9L4.500 0Z" fill="#33456e" /></svg>
          <svg width="9" height="5" viewBox="0 0 9 5"><path d="M0 0H9L4.500 5Z" fill="#33456e" /></svg>
        </FormulaSpin>
        <FormulaExpand>
          <svg width="8" height="8" viewBox="0 0 8 8" fill="none" stroke="#000" strokeWidth="1.500"><path d="M1 .5L4 3 7 .5M1 4.500L4 7 7 4.500" /></svg>
        </FormulaExpand>
      </FormulaBar>
      <Strip />

      <Work>
        <Sheet>
          <HeadRow>
            <Corner><svg width="9" height="8" viewBox="0 0 9 8"><path d="M9 0V8H0Z" fill="#e6effb" /></svg></Corner>
            {cols.map(([c, w]) => <ColHead key={c} $w={w} $on={c === "G"}>{c}</ColHead>)}
          </HeadRow>
          {rows.map((r) => (
            <SheetRow key={r.n} $h={r.h}>
              <RowHead $on={r.on}>{r.n}</RowHead>
              {cols.map(([c, w]) => (
                <Cell key={c} $w={w} $c={c === "M" ? GREEN : undefined} $bg={r.on && c === "Q" ? "#ffff00" : undefined}>
                  {(r.cells[c] || []).map(([t, tw], i) => <Fit key={i} w={tw}>{t}</Fit>)}
                  {c === "E" && <Flag width="5" height="5" viewBox="0 0 5 5"><path d="M0 0H5L0 5Z" fill="#0a7d14" /></Flag>}
                  {c === "G" && r.on && (
                    <>
                      <Selection><FillHandle /></Selection>
                      <Mark $x={124} $y={95} $w={35} $h={28} />
                      <Mark $x={74} $y={130} $w={157} $h={25} />
                    </>
                  )}
                </Cell>
              ))}
            </SheetRow>
          ))}
          <SheetRow $h={16}>
            <RowHead>7</RowHead>
            {cols.map(([c, w]) => <Cell key={c} $w={w} />)}
          </SheetRow>
        </Sheet>
        <VScroll>
          <SplitBox><i /></SplitBox>
          <VArrow $h={89} $pt={7}><svg width="9" height="5" viewBox="0 0 9 5"><path d="M0 5H9L4.500 0Z" fill="#3c4d78" /></svg></VArrow>
          <VThumb><svg width="8" height="8" viewBox="0 0 8 8"><path d="M0 .5H8M0 2.500H8M0 4.500H8M0 6.500H8" stroke="#6f7f99" /></svg></VThumb>
          <VArrow $h={65} $pt={54}><svg width="9" height="5" viewBox="0 0 9 5"><path d="M0 0H9L4.500 5Z" fill="#3c4d78" /></svg></VArrow>
        </VScroll>
      </Work>

      <SheetBar>
        <SheetNav><NavArrow bar /><NavArrow /><NavArrow dir="r" /><NavArrow dir="r" bar /></SheetNav>
        <SheetTabs>
          <TabShape width="130" height="16" viewBox="0 0 130 16">
            <path d="M80 14.500L92 1H123L112 14.500Z" fill="#d5e4f8" stroke="#7f9dc8" />
            <path d="M0 0H90L79 15H4Q2 15 0 8Z" fill="#f3f8ff" stroke="#8fabd3" strokeWidth=".6" />
            <path d="M97.500 4.500H105.500V10.500L103.500 12.500H99.500L97.500 10.500Z" fill="#fff" stroke="#5f7299" />
            <path d="M95.500 1V8M92 4.500H99M93 2L98 7M98 2L93 7" stroke="#e08a2c" />
            <circle cx="95.500" cy="4.500" r="1.300" fill="#fff3c4" />
          </TabShape>
          <TabName><Fit w={66}>Comments</Fit></TabName>
        </SheetTabs>
        <HSplit><i /></HSplit>
        <HTrack>
          <svg width="11" height="9" viewBox="0 0 11 9"><path d="M10 0V9L5.500 4.500Z" fill="#33456e" /></svg>
          <HThumb><svg width="8" height="8" viewBox="0 0 8 8"><path d="M.5 0V8M2.500 0V8M4.500 0V8M6.500 0V8" stroke="#6f7f99" /></svg></HThumb>
          <svg width="6" height="9" viewBox="0 0 6 9"><path d="M1 0V9L5.500 4.500Z" fill="#33456e" /></svg>
        </HTrack>
        <HSplit><i /></HSplit>
        <ScrollCorner />
      </SheetBar>

      <StatusBar>
        <StatusItem $w={48} $pl={7}><Fit w={31}>Ready</Fit></StatusItem>
        <StatusItem $w={33} $pl={8}><MacroIcon /></StatusItem>
        <StatusRight>
          <ViewSet>
            <ViewCell $on><svg width="13" height="11" viewBox="0 0 13 11"><path d="M.5.5H12.500V10.500H.5ZM.5 3.500H12.500M.5 7H12.500M4.500.5V10.500M8.500.5V10.500" fill="#fff" stroke="#6e6a62" /></svg></ViewCell>
            <ViewCell><svg width="13" height="12" viewBox="0 0 13 12"><rect x=".5" y=".5" width="12" height="11" fill="#a9adb4" stroke="#666c76" /><rect x="3.500" y="2" width="6" height="8" fill="#fff" stroke="#555" /><path d="M5 4.500H8M5 6.500H8M5 8.500H8" stroke="#777" strokeWidth=".8" /></svg></ViewCell>
            <ViewCell><svg width="13" height="12" viewBox="0 0 13 12"><rect x=".5" y=".5" width="12" height="11" fill="#a9adb4" stroke="#666c76" /><path d="M2 1H4.500V7H2ZM5.500 1H8V7H5.500Z" fill="#fff" /></svg></ViewCell>
          </ViewSet>
          <ZoomLabel><Fit w={27}>100%</Fit></ZoomLabel>
          <ZoomKnob />
          <svg width="101" height="17" viewBox="0 0 101 17">
            <path d="M0 8.500H101" stroke="#4e70a6" /><path d="M0 9.500H101" stroke="#b4cdf1" />
            <path d="M46 2.500H54V10L50 14 46 10Z" fill="#e7eef8" stroke="#4d5f80" /><path d="M50 5V10" stroke="#8192b0" />
          </svg>
          <ZoomKnob plus />
        </StatusRight>
      </StatusBar>
    </Window>
  );
}
